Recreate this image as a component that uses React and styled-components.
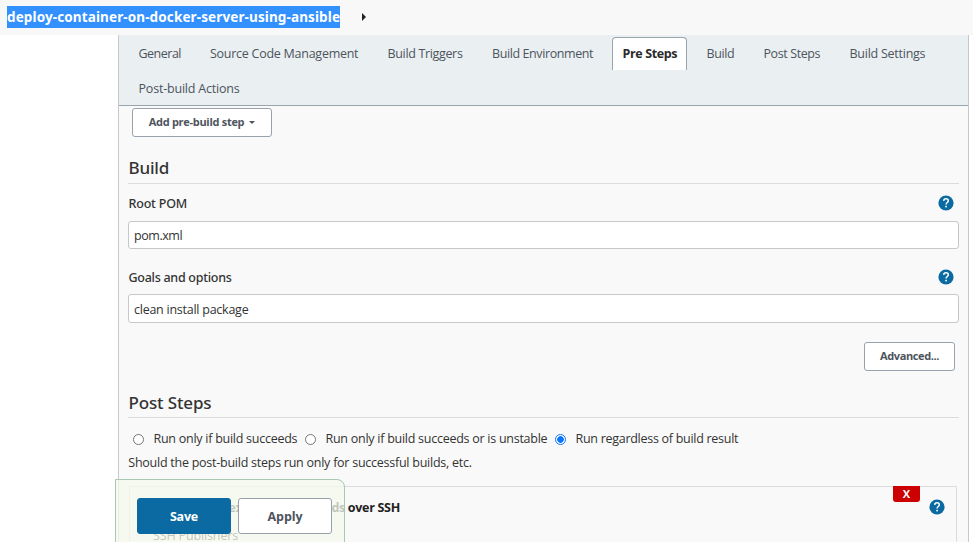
import React from 'react';
import styled, { createGlobalStyle } from 'styled-components';

const GlobalStyle = createGlobalStyle`
  * { box-sizing: border-box; }
  html, body { margin: 0; height: 542px; overflow: hidden; background: #fff; }
  body { font-family: "Open Sans", "Noto Sans", sans-serif; font-size: 12.5px; color: #333; }
`;

const Page = styled.div`
  position: relative;
  width: 973px;
  height: 542px;
  overflow: hidden;
`;

const Breadcrumb = styled.header`
  display: flex;
  align-items: center;
  height: 35px;
  padding-left: 7px;
  background: #f8f8f8;
`;

const JobName = styled.span`
  height: 22px;
  width: 333px;
  margin-top: -1px;
  white-space: nowrap;
  background: #3390ff;
  color: #fff;
  font: 700 13.5px/22px "Noto Sans", sans-serif;
  letter-spacing: 0.12px;
`;

const Arrow = styled.i`
  margin: -2px 0 0 22px;
  border: solid transparent;
  border-width: 4px 0 4px 4px;
  border-left-color: #222;
`;

const Panel = styled.main`
  width: 851px;
  height: 507px;
  margin-left: 118px;
  border: solid #c5c9cc;
  border-width: 0 1px;
  background: #f9f9f9;
`;

const Tabs = styled.nav`
  display: flex;
  flex-wrap: wrap;
  align-content: flex-start;
  height: 71px;
  padding: 2px 0 0 8px;
  background: #eaeff2;
  border-bottom: 1px solid #98a5ad;
`;

const Tab = styled.a`
  width: ${(p) => p.$width}px;
  height: 33px;
  margin: 0 8px 2px 0;
  padding-left: ${(p) => (p.$active ? 9.5 : 11.5)}px;
  line-height: ${(p) => (p.$active ? 31 : 33)}px;
  white-space: nowrap;
  color: ${(p) => (p.$active ? '#2b2b2b' : '#4d545d')};
  font-weight: ${(p) => (p.$active ? 700 : 400)};
  letter-spacing: ${(p) => p.$spacing}px;
  ${(p) =>
    p.$active &&
    `background: #fff;
    border: 1px solid #98a5ad;
    border-bottom: 0;
    border-radius: 4px 4px 0 0;`}
`;

const Form = styled.div`
  padding: 2px 9px 0;
`;

const Button = styled.button`
  display: flex;
  align-items: center;
  justify-content: center;
  width: ${(p) => p.$width}px;
  height: ${(p) => p.$height || 29}px;
  padding: 0 0 ${(p) => (p.$height ? 0 : 2)}px;
  border: 1px solid ${(p) => (p.$primary ? '#0b6aa2' : '#98a2ac')};
  border-radius: 3px;
  background: ${(p) => (p.$primary ? '#0b6aa2' : '#fff')};
  color: ${(p) => (p.$primary ? '#fff' : '#4d545d')};
  font: 700 ${(p) => p.$size || 11}px "Open Sans", sans-serif;
  letter-spacing: ${(p) => p.$spacing}px;
`;

const AddRow = styled.div`
  height: 49px;
  padding-left: 4px;
`;

const Caret = styled.i`
  margin: 2px 0 0 5px;
  border: solid transparent;
  border-width: 3.5px 3.5px 0;
  border-top-color: #4d545d;
`;

const Heading = styled.h2`
  height: ${(p) => p.$height}px;
  margin: 0;
  border-bottom: 1px solid #dcdcdc;
  font: 500 17px/22px "Noto Sans", sans-serif;
  letter-spacing: -0.13px;
  text-indent: 0.4px;
`;

const FieldHead = styled.div`
  display: flex;
  justify-content: space-between;
  height: ${(p) => p.$height}px;
  padding: ${(p) => p.$top}px 5px 0 0;
`;

const Label = styled.label`
  font: 500 12.5px/18px "Noto Sans", sans-serif;
  letter-spacing: ${(p) => p.$spacing}px;
  text-indent: 0.5px;
`;

const Input = styled.input`
  display: block;
  width: 831px;
  height: ${(p) => p.$height}px;
  padding: ${(p) => p.$height - 28}px 5px 0;
  border: 1px solid #c5c7c9;
  border-radius: 3px;
  outline: none;
  background: #fff;
  color: #333;
  font: 12.5px "Open Sans", sans-serif;
  letter-spacing: ${(p) => p.$spacing}px;
`;

const AdvancedRow = styled.div`
  display: flex;
  justify-content: flex-end;
  height: 69px;
  padding: 19px 4px 0 0;
`;

const RadioRow = styled.div`
  display: flex;
  align-items: center;
  height: 41px;
  padding-left: 5px;
`;

const RadioLabel = styled.label`
  display: flex;
  align-items: center;
  width: ${(p) => p.$width}px;
  white-space: nowrap;
  letter-spacing: ${(p) => p.$spacing}px;
`;

const Dot = styled.span`
  flex: none;
  width: 11px;
  height: 11px;
  margin: 2px 9.5px 0 0;
  border: 1px solid ${(p) => (p.$on ? '#0a75ff' : '#767676')};
  border-radius: 50%;
  background: ${(p) => (p.$on ? 'radial-gradient(#0a75ff 0 3px, #fff 3.6px)' : '#fff')};
`;

const Note = styled.p`
  height: 27px;
  margin: 0;
  line-height: 8px;
  letter-spacing: -0.25px;
  text-indent: 0.3px;
`;

const Step = styled.section`
  display: flex;
  justify-content: space-between;
  width: 828px;
  height: 90px;
  margin-left: 1px;
  padding: 0 11px 0 23px;
  border: 1px solid #dcdcdc;
`;

const StepTitle = styled.div`
  padding-top: 12px;
  font-weight: 700;
  line-height: 18px;
  letter-spacing: -0.3px;
  color: #222;
`;

const StepText = styled.div`
  margin-top: 10px;
  font-weight: 400;
  letter-spacing: -0.14px;
`;

const StepTools = styled.div`
  display: flex;
  gap: 9px;
`;

const Delete = styled.button`
  width: 27px;
  height: 16px;
  margin-top: -1px;
  padding: 0;
  border: 0;
  border-radius: 0 0 3px 3px;
  background: #c00;
  color: #fff;
  font: 700 11px/14px "Open Sans", sans-serif;
`;

const HelpSvg = styled.svg`
  display: block;
  flex: none;
  margin-top: ${(p) => p.$top || 0}px;
`;

const SaveBar = styled.div`
  position: absolute;
  left: 115px;
  top: 479px;
  display: flex;
  gap: 7px;
  width: 230px;
  height: 70px;
  padding: 18px 0 0 21px;
  border: 1px solid #a9c8b4;
  border-radius: 0 8px 0 0;
  background: rgba(244, 248, 237, 0.76);
`;

function Help({ top }) {
  return (
    <HelpSvg $top={top} width="16" height="16" viewBox="0 0 16 16" fill="none">
      <circle cx="8" cy="8" r="7.6" fill="#0b6aa2" />
      <path d="M5.7 5.9C5.8 4.5 6.7 3.8 8 3.8s2.3.8 2.3 2c0 1.7-2.2 1.7-2.2 3.6" stroke="#fff" strokeWidth="1.5" />
      <rect x="7.25" y="10.8" width="1.6" height="1.6" fill="#fff" />
    </HelpSvg>
  );
}

const tabs = [
  ['General', 63.5, -0.5],
  ['Source Code Management', 169.5, -0.26],
  ['Build Triggers', 96.5, -0.34],
  ['Build Environment', 123.5, -0.4],
  ['Pre Steps', 75, -0.37],
  ['Build', 49, -0.4],
  ['Post Steps', 78, -0.4],
  ['Build Settings', 98, -0.25],
  ['Post-build Actions', 123, -0.2],
];

export default function App() {
  return (
    <Page>
      <GlobalStyle />
      <Breadcrumb>
        <JobName>deploy-container-on-docker-server-using-ansible</JobName>
        <Arrow />
      </Breadcrumb>
      <Panel>
        <Tabs>
          {tabs.map(([name, width, spacing]) => (
            <Tab key={name} $width={width} $spacing={spacing} $active={name === 'Pre Steps'}>
              {name}
            </Tab>
          ))}
        </Tabs>
        <Form>
          <AddRow>
            <Button $width={140} $spacing={-0.29}>
              Add pre-build step
              <Caret />
            </Button>
          </AddRow>
          <Heading $height={27}>Build</Heading>
          <FieldHead $height={37} $top={11}>
            <Label $spacing={-0.2}>Root POM</Label>
            <Help />
          </FieldHead>
          <Input $height={28} $spacing={-0.45} defaultValue="pom.xml" />
          <FieldHead $height={45} $top={20}>
            <Label $spacing={-0.27}>Goals and options</Label>
            <Help />
          </FieldHead>
          <Input $height={29} $spacing={-0.25} defaultValue="clean install package" />
          <AdvancedRow>
            <Button $width={91} $spacing={-0.4}>Advanced...</Button>
          </AdvancedRow>
          <Heading $height={26}>Post Steps</Heading>
          <RadioRow>
            <RadioLabel $width={172} $spacing={-0.26}>
              <Dot />
              Run only if build succeeds
            </RadioLabel>
            <RadioLabel $width={250} $spacing={-0.26}>
              <Dot />
              Run only if build succeeds or is unstable
            </RadioLabel>
            <RadioLabel $width={190} $spacing={-0.28}>
              <Dot $on />
              Run regardless of build result
            </RadioLabel>
          </RadioRow>
          <Note>Should the post-build steps run only for successful builds, etc.</Note>
          <Step>
            <StepTitle>
              Send files or execute commands over SSH
              <StepText>SSH Publishers</StepText>
            </StepTitle>
            <StepTools>
              <Delete>X</Delete>
              <Help top={12} />
            </StepTools>
          </Step>
        </Form>
      </Panel>
      <SaveBar>
        <Button $primary $width={94} $height={36} $size={12.5} $spacing={-0.2}>Save</Button>
        <Button $width={94} $height={36} $size={12.5} $spacing={-0.1}>Apply</Button>
      </SaveBar>
    </Page>
  );
}
